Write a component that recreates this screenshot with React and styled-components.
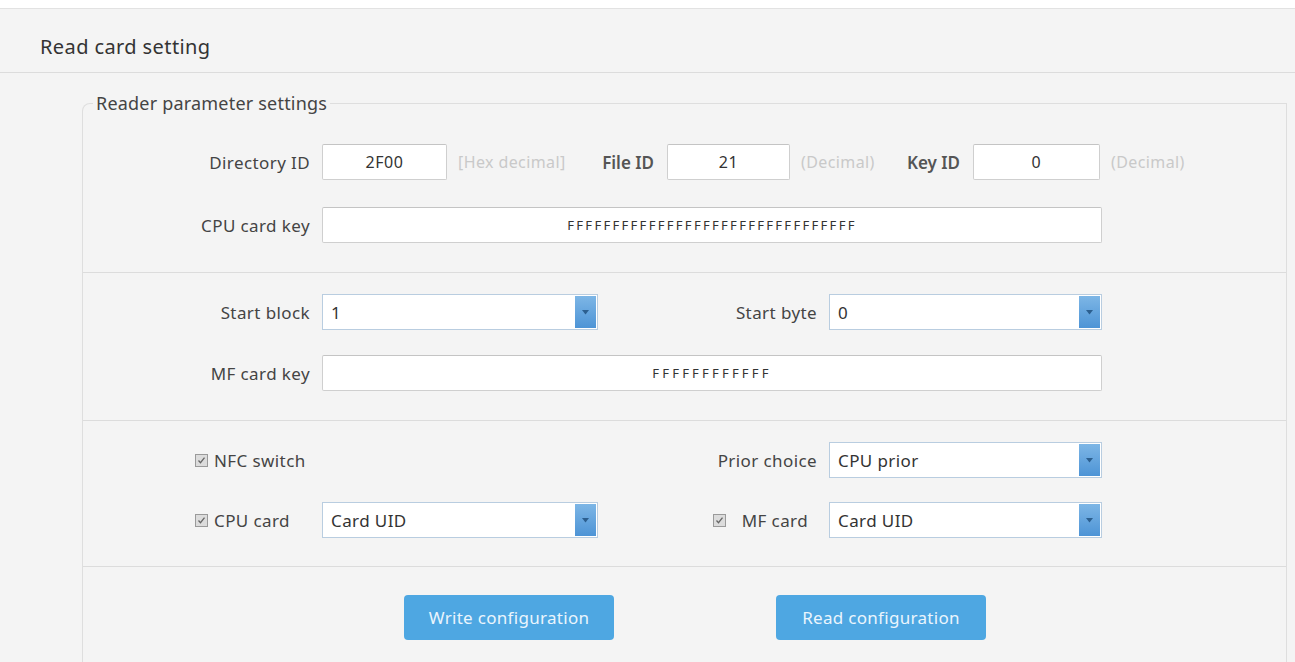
import React from "react";
import styled, { createGlobalStyle } from "styled-components";

const GlobalStyle = createGlobalStyle`
  html, body {
    margin: 0;
    padding: 0;
    background: #f4f4f4;
    font-family: "Noto Sans", "Open Sans", sans-serif;
    color: #333;
  }
`;

const Page = styled.div`
  min-height: 662px;
  border-top: 8px solid #ffffff;
  overflow: hidden;
`;

const Header = styled.div`
  height: 65px;
  border-top: 1px solid #e2e2e2;
  border-bottom: 1px solid #dcdcdc;
  display: flex;
  align-items: center;
  padding: 12px 0 0 40px;
  box-sizing: border-box;
  font-size: 20px;
  letter-spacing: 0.4px;
  color: #333;
`;

const Group = styled.fieldset`
  margin: 20px 8px 0 82px;
  padding: 0;
  border: 1px solid #dedede;
  border-bottom: none;
  border-radius: 8px 0 0 0;
  min-width: 0;
`;

const Legend = styled.legend`
  margin-left: 10px;
  padding: 0 3px;
  font-size: 18px;
  letter-spacing: 0.2px;
  line-height: 20px;
  color: #444;
`;

const Section = styled.div`
  display: grid;
  grid-template-columns: 227px 276px 207px 273px;
  column-gap: 12px;
  row-gap: ${(p) => p.gap || 26}px;
  padding: ${(p) => p.pad || "21px 0 29px"};
  border-top: ${(p) => (p.first ? "none" : "1px solid #dcdcdc")};
`;

const Label = styled.div`
  display: flex;
  align-items: center;
  justify-content: flex-end;
  height: 36px;
  font-size: 17px;
  letter-spacing: 0.4px;
  color: #444;
  white-space: nowrap;
`;

const Inline = styled.div`
  grid-column: 2 / span 3;
  display: flex;
  align-items: center;
  white-space: nowrap;
`;

const TextBox = styled.div`
  box-sizing: border-box;
  height: 36px;
  width: ${(p) => (p.w ? `${p.w}px` : "auto")};
  grid-column: ${(p) => (p.wide ? "2 / span 3" : "auto")};
  background: #fff;
  border: 1px solid #cfcfcf;
  border-top-color: #c4c4c4;
  border-radius: 2px;
  display: flex;
  align-items: center;
  justify-content: center;
  font-size: ${(p) => (p.small ? 13 : 16)}px;
  letter-spacing: ${(p) => (p.spacing != null ? p.spacing : 0.6)}px;
  color: #333;
  flex-shrink: 0;
`;

const Hint = styled.span`
  flex-shrink: 0;
  width: ${(p) => p.w}px;
  margin-left: 11px;
  font-size: 16px;
  color: #c9c9c9;
  letter-spacing: 0.4px;
`;

const SubLabel = styled.span`
  flex-shrink: 0;
  width: ${(p) => p.w}px;
  padding-right: 13px;
  text-align: right;
  font-size: 17px;
  font-weight: 600;
  color: #555;
  box-sizing: border-box;
`;

const SelectBox = styled.div`
  box-sizing: border-box;
  height: 36px;
  background: #fff;
  border: 1px solid #b9cde0;
  display: flex;
  align-items: stretch;
  font-size: 17px;
  letter-spacing: 0.4px;
  color: #333;
`;

const SelectValue = styled.span`
  flex: 1;
  display: flex;
  align-items: center;
  padding-left: 8px;
`;

const Arrow = styled.span`
  width: 21px;
  margin: 1px;
  background: linear-gradient(#7db6e6, #4d94d6);
  display: flex;
  align-items: center;
  justify-content: center;
`;

const Check = styled.label`
  display: flex;
  align-items: center;
  justify-content: ${(p) => (p.end ? "flex-end" : "flex-start")};
  height: 36px;
  padding-left: ${(p) => (p.end ? 0 : 112)}px;
  padding-right: ${(p) => (p.end ? 9 : 0)}px;
  font-size: 17px;
  letter-spacing: 0.4px;
  color: #444;
  gap: ${(p) => p.gap || 6}px;
  white-space: nowrap;
`;

const Box = styled.span`
  width: 11px;
  height: 11px;
  border: 1px solid #9a9a9a;
  background: #dcdcdc;
  display: flex;
  align-items: center;
  justify-content: center;
`;

const Buttons = styled.div`
  display: flex;
  gap: 162px;
  padding: 28px 0 30px 321px;
  border-top: 1px solid #dcdcdc;
`;

const Button = styled.button`
  width: 210px;
  height: 45px;
  border: none;
  border-radius: 4px;
  background: #4ea7e2;
  color: #eaf5fd;
  font-family: inherit;
  font-size: 17px;
  letter-spacing: 0.3px;
  cursor: pointer;
`;

function Select({ value }) {
  return (
    <SelectBox>
      <SelectValue>{value}</SelectValue>
      <Arrow>
        <svg width="7" height="5" viewBox="0 0 7 5">
          <path d="M0 0h7L3.5 4.5z" fill="#2c5f8f" />
        </svg>
      </Arrow>
    </SelectBox>
  );
}

function Tick({ children, end, gap }) {
  return (
    <Check end={end} gap={gap}>
      <Box>
        <svg width="9" height="9" viewBox="0 0 9 9">
          <path d="M1.5 4.5l2 2.2 4-5" stroke="#666" strokeWidth="1.3" fill="none" />
        </svg>
      </Box>
      {children}
    </Check>
  );
}

export default function App() {
  return (
    <Page>
      <GlobalStyle />
      <Header>Read card setting</Header>
      <Group>
        <Legend>Reader parameter settings</Legend>

        <Section first pad="31px 0 29px" gap={27}>
          <Label>Directory ID</Label>
          <Inline>
            <TextBox w={125}>2F00</TextBox>
            <Hint w={139}>[Hex decimal]</Hint>
            <SubLabel w={70}>File ID</SubLabel>
            <TextBox w={123}>21</TextBox>
            <Hint w={97}>(Decimal)</Hint>
            <SubLabel w={75}>Key ID</SubLabel>
            <TextBox w={127}>0</TextBox>
            <Hint w={90}>(Decimal)</Hint>
          </Inline>
          <Label>CPU card key</Label>
          <TextBox wide small spacing={2.3}>
            FFFFFFFFFFFFFFFFFFFFFFFFFFFFFFFF
          </TextBox>
        </Section>

        <Section pad="21px 0 29px" gap={25}>
          <Label>Start block</Label>
          <Select value="1" />
          <Label>Start byte</Label>
          <Select value="0" />
          <Label>MF card key</Label>
          <TextBox wide small spacing={3.2}>
            FFFFFFFFFFFF
          </TextBox>
        </Section>

        <Section pad="21px 0 28px" gap={24}>
          <Tick>NFC switch</Tick>
          <div />
          <Label>Prior choice</Label>
          <Select value="CPU prior" />
          <Tick>CPU card</Tick>
          <Select value="Card UID" />
          <Tick end gap={16}>MF card</Tick>
          <Select value="Card UID" />
        </Section>

        <Buttons>
          <Button>Write configuration</Button>
          <Button>Read configuration</Button>
        </Buttons>
      </Group>
    </Page>
  );
}
